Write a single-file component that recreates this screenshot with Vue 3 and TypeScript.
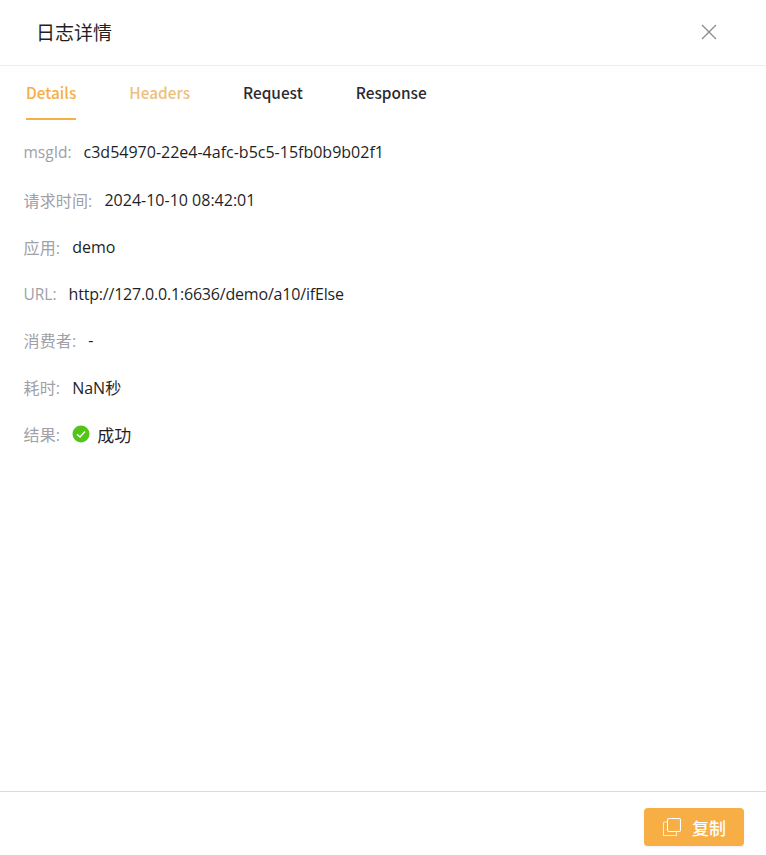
<script setup lang="ts">
const rows = [
  { label: '请求时间:', value: '2024-10-10 08:42:01', latin: false },
  { label: '应用:', value: 'demo', latin: false },
  { label: 'URL:', value: 'http://127.0.0.1:6636/demo/a10/ifElse', latin: true },
  { label: '消费者:', value: '-', latin: false },
  { label: '耗时:', value: 'NaN秒', latin: false },
]
const tabs = ['Details', 'Headers', 'Request', 'Response']
</script>

<template>
  <div class="drawer">
    <header class="head">
      <span class="title">日志详情</span>
      <svg class="close" width="16" height="16" viewBox="0 0 16 16" fill="none" stroke="#8a8a8a" stroke-width="1.3">
        <path d="M1 1 15 15M15 1 1 15" />
      </svg>
    </header>
    <nav class="tabs">
      <span
        v-for="(t, i) in tabs"
        :key="t"
        class="tab"
        :class="{ active: i === 0, muted: i === 1 }"
      >{{ t }}</span>
    </nav>
    <main class="body">
      <div class="row first">
        <span class="label latin">msgId:</span>
        <span class="value">c3d54970-22e4-4afc-b5c5-15fb0b9b02f1</span>
      </div>
      <div v-for="r in rows" :key="r.label" class="row">
        <span class="label" :class="{ latin: r.latin }">{{ r.label }}</span>
        <span class="value" :class="{ tight: r.latin }">{{ r.value }}</span>
      </div>
      <div class="row">
        <span class="label">结果:</span>
        <span class="value status">
          <svg width="18" height="18" viewBox="0 0 18 18">
            <circle cx="9" cy="9" r="8.5" fill="#52c41a" />
            <path d="M5 9.2 8 12 13 6.6" fill="none" stroke="#fff" stroke-width="1.4" />
          </svg>
          成功
        </span>
      </div>
    </main>
    <footer class="foot">
      <button class="copy" type="button">
        <svg width="20" height="20" viewBox="0 0 20 20" fill="none" stroke="#fff" stroke-width="1.1">
          <rect x="5.5" y="1.5" width="13" height="13" rx="1.5" />
          <path d="M5 5H2.5A1.2 1.2 0 0 0 1.5 6.2V18.5H14.5V15" stroke-opacity=".75" />
        </svg>
        <span>复制</span>
      </button>
    </footer>
  </div>
</template>

<style scoped>
.drawer {
  width: 766px;
  height: 855px;
  display: flex;
  flex-direction: column;
  background: #fff;
  font-family: "Open Sans", "Noto Sans CJK SC", sans-serif;
  font-size: 16px;
  color: #1f1f26;
}
.head {
  height: 66px;
  box-sizing: border-box;
  flex: none;
  border-bottom: 1px solid #ececec;
  display: flex;
  align-items: center;
  justify-content: space-between;
  padding: 0 49px 2px 36px;
}
.title {
  font-size: 19px;
  line-height: 26px;
  font-family: "Noto Sans CJK SC", sans-serif;
}
.close {
  margin-top: 1px;
}
.tabs {
  display: flex;
  gap: 53px;
  padding-left: 26px;
  height: 54px;
  flex: none;
}
.tab {
  box-sizing: border-box;
  line-height: 52px;
  height: 54px;
  font-family: "Noto Sans CJK SC", sans-serif;
  font-size: 15.4px;
  font-weight: 500;
  color: #2a2a30;
}
.tab.active {
  color: #f6ae45;
  border-bottom: 2px solid #f6ae45;
}
.tab.muted {
  color: #eebf7c;
}
.body {
  flex: 1;
  padding: 8.8px 24px 0 23.5px;
}
.row {
  display: flex;
  align-items: center;
  height: 46.9px;
  gap: 12px;
}
.row.first {
  height: 47px;
  margin-bottom: .5px;
}
.label {
  color: #a0a0a8;
  letter-spacing: .15px;
}
.label.latin {
  font-size: 15.5px;
  letter-spacing: 0;
}
.tight {
  letter-spacing: -.19px;
}
.status {
  display: flex;
  align-items: center;
  gap: 7px;
  font-size: 17px;
}
.foot {
  flex: none;
  height: 64px;
  box-sizing: border-box;
  border-top: 1px solid #dcdcdc;
  display: flex;
  justify-content: flex-end;
  padding: 16px 22px 0 0;
}
.copy {
  width: 100px;
  height: 38px;
  border: none;
  border-radius: 4px;
  background: #f6ae45;
  color: #fff;
  font: 500 17px "Noto Sans CJK SC", sans-serif;
  display: flex;
  align-items: center;
  justify-content: center;
  gap: 10px;
  box-shadow: 0 1px 2px rgba(0, 0, 0, .08);
  padding: 0;
}
</style>
